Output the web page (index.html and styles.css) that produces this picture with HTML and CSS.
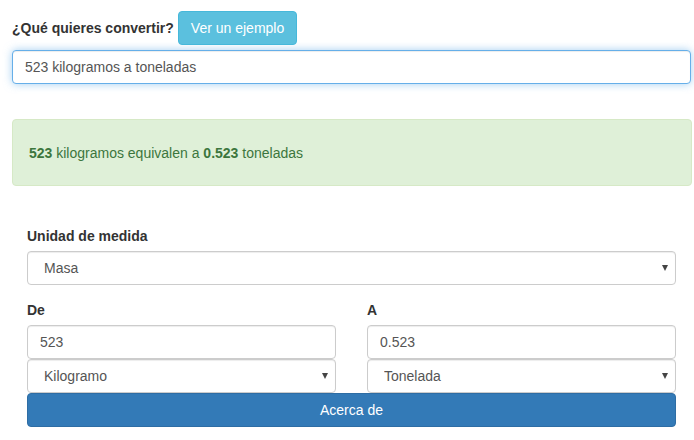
FILE: index.html
```html
<!DOCTYPE html>
<html lang="es">
<head>
<meta charset="utf-8">
<title>Conversor</title>
<link rel="stylesheet" href="styles.css">
</head>
<body>
<div class="page">
  <div class="query-head">
    <label class="query-label" for="q">¿Qué quieres convertir?</label>
    <button class="btn btn-info" type="button">Ver un ejemplo</button>
  </div>
  <input id="q" class="form-control focused" type="text" value="523 kilogramos a toneladas">

  <div class="alert-success">
    <b>523</b> kilogramos equivalen a <b>0.523</b> toneladas
  </div>

  <div class="converter">
    <label class="field-label">Unidad de medida</label>
    <div class="select-wrap">
      <select class="form-select"><option>Masa</option></select>
    </div>

    <div class="cols">
      <div class="col">
        <label class="field-label">De</label>
        <input class="form-control" type="text" value="523">
        <div class="select-wrap">
          <select class="form-select"><option>Kilogramo</option></select>
        </div>
      </div>
      <div class="col">
        <label class="field-label">A</label>
        <input class="form-control" type="text" value="0.523">
        <div class="select-wrap">
          <select class="form-select"><option>Tonelada</option></select>
        </div>
      </div>
    </div>
    <button class="btn btn-primary" type="button">Acerca de</button>
  </div>
</div>
</body>
</html>
```

FILE: styles.css
```css
* { box-sizing: border-box; }

html, body {
  margin: 0;
  padding: 0;
  background: #fff;
}

body {
  font-family: "Liberation Sans", Arial, sans-serif;
  font-size: 14px;
  line-height: 20px;
  color: #333;
}

.page {
  padding: 11px 3px 0 12px;
}

.query-head {
  display: flex;
  align-items: center;
  gap: 4px;
}

.query-label {
  font-weight: bold;
}

.btn {
  font-family: "Liberation Sans", Arial, sans-serif;
  font-size: 14px;
  line-height: 20px;
  padding: 6px 12px;
  border-radius: 4px;
  border: 1px solid transparent;
  color: #fff;
  cursor: pointer;
}

.btn-info {
  background: #5bc0de;
  border-color: #46b8da;
  height: 34px;
}

.btn-primary {
  display: block;
  width: 100%;
  background: #337ab7;
  border-color: #2e6da4;
  height: 34px;
  text-align: center;
}

.form-control {
  display: block;
  width: 100%;
  height: 34px;
  margin: 0;
  padding: 6px 12px;
  font-family: "Liberation Sans", Arial, sans-serif;
  font-size: 14px;
  line-height: 20px;
  color: #555;
  background: #fff;
  border: 1px solid #ccc;
  border-radius: 4px;
  box-shadow: inset 0 1px 1px rgba(0,0,0,.075);
  outline: none;
}

.form-control.focused {
  margin-top: 5px;
  border-color: #66afe9;
  box-shadow: inset 0 1px 1px rgba(0,0,0,.075), 0 0 8px rgba(102,175,233,.6);
}

.alert-success {
  margin-top: 35px;
  margin-right: -1px;
  height: 67px;
  padding: 23px 16px 0;
  background: #dff0d8;
  border: 1px solid #d6e9c6;
  border-radius: 4px;
  color: #3c763d;
}

.converter {
  padding: 40px 15px 0;
}

.field-label {
  display: block;
  font-weight: bold;
  margin-bottom: 5px;
}

.select-wrap {
  position: relative;
}

.select-wrap::after {
  content: "";
  position: absolute;
  right: 8px;
  top: 14px;
  border-left: 3.5px solid transparent;
  border-right: 3.5px solid transparent;
  border-top: 6px solid #444;
  pointer-events: none;
}

.form-select {
  display: block;
  width: 100%;
  height: 34px;
  margin: 0;
  padding: 6px 12px 6px 16px;
  font-family: "Liberation Sans", Arial, sans-serif;
  font-size: 14px;
  line-height: 20px;
  color: #555;
  background: #fff;
  border: 1px solid #ccc;
  border-radius: 4px;
  box-shadow: inset 0 1px 1px rgba(0,0,0,.075);
  -webkit-appearance: none;
  appearance: none;
  outline: none;
}

.cols {
  display: grid;
  grid-template-columns: 1fr 1fr;
  column-gap: 31px;
  margin-top: 15px;
}
```
